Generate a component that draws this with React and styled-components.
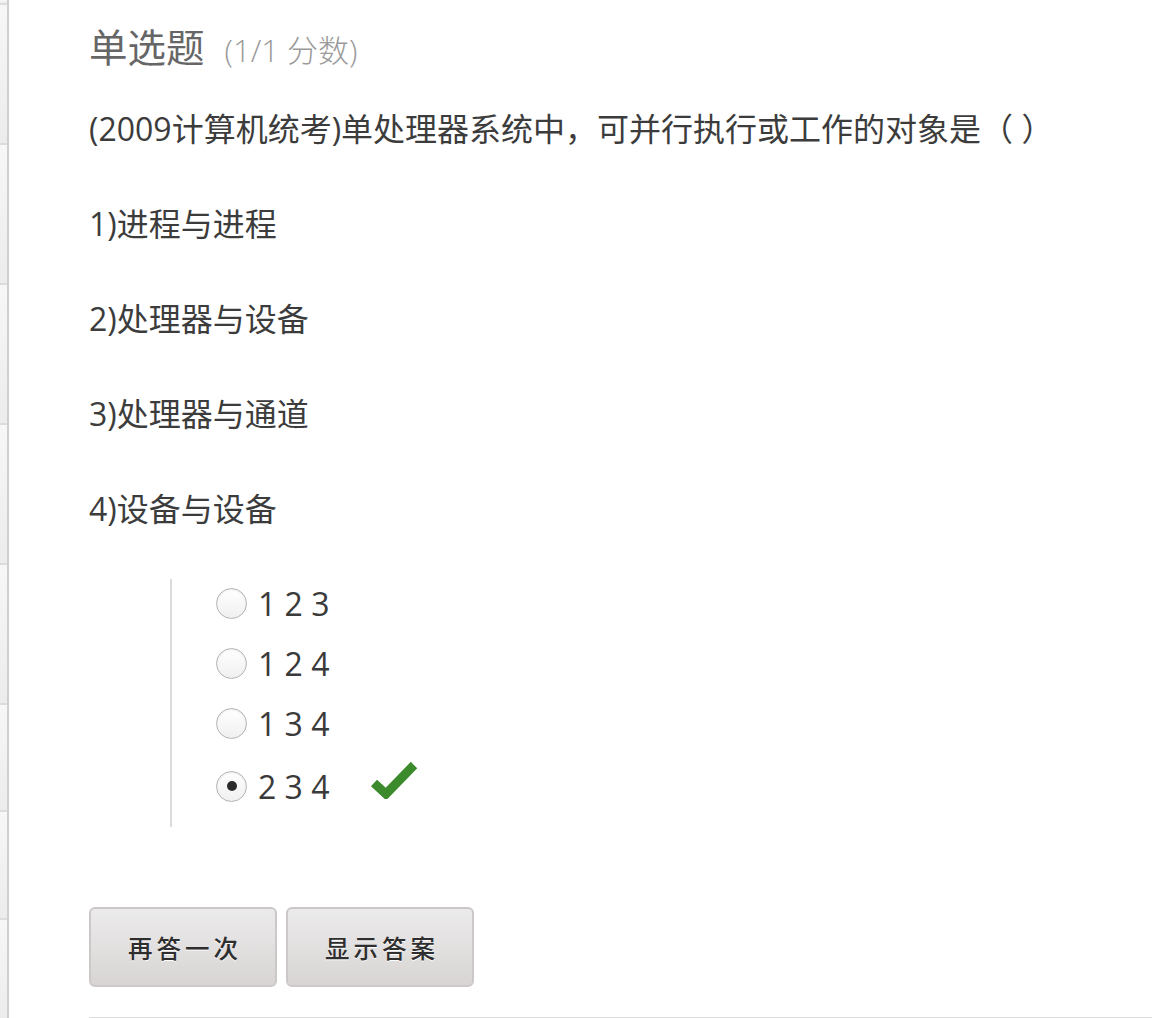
import React from "react";
import styled, { createGlobalStyle } from "styled-components";

const GlobalStyle = createGlobalStyle`
  body {
    margin: 0;
    background: #fff;
    font-family: "Open Sans", "Noto Sans CJK SC", sans-serif;
  }
`;

const Page = styled.div`
  display: flex;
  height: 1018px;
  overflow: hidden;
`;

const Sidebar = styled.div`
  width: 7px;
  flex-shrink: 0;
  border-right: 2px solid #cfcfcf;
  display: flex;
  flex-direction: column;
`;

const Tab = styled.div`
  height: ${(p) => p.h}px;
  flex-shrink: 0;
  background: linear-gradient(#f7f7f7, #ececec);
  border-bottom: 2px solid #dcdcdc;
`;

const Main = styled.div`
  flex: 1;
  padding: 22px 0 0 80px;
  display: flex;
  flex-direction: column;
`;

const Title = styled.h2`
  margin: 0;
  font-size: 38.5px;
  line-height: 50px;
  font-weight: 400;
  color: #666;
`;

const Score = styled.span`
  margin-left: 20px;
  font-size: 31px;
  font-weight: 300;
  color: #9a9a9a;
`;

const Para = styled.p`
  margin: ${(p) => (p.first ? "30px" : "48px")} 0 0;
  font-size: 32px;
  line-height: 47px;
  color: #3c3c3c;
`;

const Options = styled.div`
  margin: 47px 0 0 81px;
  padding: 0 0 14px 44px;
  border-left: 2px solid #dcdcdc;
  display: flex;
  flex-direction: column;
  gap: 12px;
`;

const Option = styled.label`
  display: flex;
  align-items: center;
  min-height: ${(p) => (p.tall ? 52 : 48)}px;
  font-size: 32px;
  color: #3a3a3a;
`;

const Radio = styled.span`
  width: 29px;
  height: 29px;
  border-radius: 50%;
  border: 1px solid #b4b4b4;
  background: linear-gradient(#fff, #f0f0f0);
  box-shadow: inset 0 1px 2px rgba(0, 0, 0, 0.08);
  display: flex;
  align-items: center;
  justify-content: center;
  margin-right: 11px;
  flex-shrink: 0;

  &::after {
    content: "";
    width: 10px;
    height: 10px;
    border-radius: 50%;
    background: #2b2b2b;
    display: ${(p) => (p.checked ? "block" : "none")};
  }
`;

const Check = styled.svg`
  margin: 0 0 14px 40px;
  width: 48px;
  height: 40px;
`;

const Buttons = styled.div`
  margin-top: 80px;
  display: flex;
  gap: 9px;
`;

const Button = styled.button`
  width: 188px;
  height: 80px;
  border: 2px solid #cdc8c8;
  border-radius: 6px;
  background: linear-gradient(#ecebeb, #d8d4d4);
  font-family: "Noto Sans CJK SC", sans-serif;
  font-size: 24.5px;
  font-weight: 500;
  letter-spacing: 4px;
  padding: 0 0 0 4px;
  color: #2e2e2e;
  text-shadow: 0 1px 0 #fff;
  cursor: pointer;
`;

const Rule = styled.div`
  margin-top: 30px;
  height: 2px;
  flex-shrink: 0;
  background: #dcdcdc;
`;

const tabs = [3, 138, 138, 138, 138, 138, 105, 106, 100];
const choices = ["1 2 3", "1 2 4", "1 3 4", "2 3 4"];

export default function App() {
  return (
    <>
      <GlobalStyle />
      <Page>
        <Sidebar>
          {tabs.map((h, i) => (
            <Tab key={i} h={h} />
          ))}
        </Sidebar>
        <Main>
          <Title>
            单选题<Score>(1/1 分数)</Score>
          </Title>
          <Para first>(2009计算机统考)单处理器系统中，可并行执行或工作的对象是（ ）</Para>
          <Para>1)进程与进程</Para>
          <Para>2)处理器与设备</Para>
          <Para>3)处理器与通道</Para>
          <Para>4)设备与设备</Para>
          <Options>
            {choices.map((c, i) => (
              <Option key={c} tall={i === 3}>
                <Radio checked={i === 3} />
                {c}
                {i === 3 && (
                  <Check viewBox="0 0 48 40">
                    <path
                      d="M4 24 L16 35 L44 6"
                      fill="none"
                      stroke="#3b8a2b"
                      strokeWidth="9"
                    />
                  </Check>
                )}
              </Option>
            ))}
          </Options>
          <Buttons>
            <Button>再答一次</Button>
            <Button>显示答案</Button>
          </Buttons>
          <Rule />
        </Main>
      </Page>
    </>
  );
}
